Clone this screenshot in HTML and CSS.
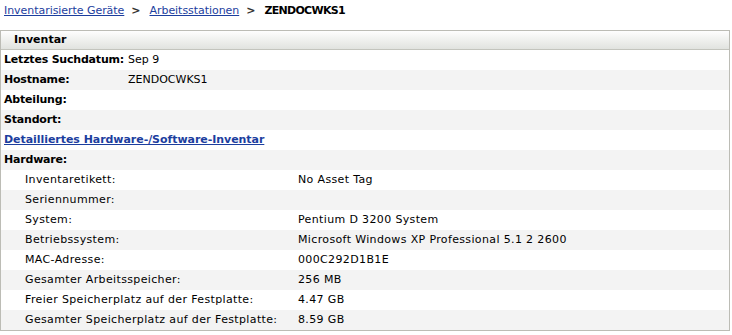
FILE: index.html
```html
<!DOCTYPE html>
<html>
<head>
<meta charset="utf-8">
<link rel="stylesheet" href="styles.css">
</head>
<body>
<div class="crumbs">
  <a href="#" class="crumb-link">Inventarisierte Geräte</a>
  <span class="sep">&gt;</span>
  <a href="#" class="crumb-link">Arbeitsstationen</a>
  <span class="sep">&gt;</span>
  <span class="current">ZENDOCWKS1</span>
</div>
<div class="panel">
  <div class="panel-head">Inventar</div>
  <div class="row odd"><span class="lbl">Letztes Suchdatum:</span><span class="val">Sep 9</span></div>
  <div class="row even"><span class="lbl">Hostname:</span><span class="val">ZENDOCWKS1</span></div>
  <div class="row odd"><span class="lbl">Abteilung:</span></div>
  <div class="row even"><span class="lbl">Standort:</span></div>
  <div class="row odd"><a href="#" class="detail-link">Detailliertes Hardware-/Software-Inventar</a></div>
  <div class="row even"><span class="lbl">Hardware:</span></div>
  <div class="row odd sub"><span class="slbl">Inventaretikett:</span><span class="sval">No Asset Tag</span></div>
  <div class="row even sub"><span class="slbl">Seriennummer:</span><span class="sval"></span></div>
  <div class="row odd sub"><span class="slbl">System:</span><span class="sval">Pentium D 3200 System</span></div>
  <div class="row even sub"><span class="slbl">Betriebssystem:</span><span class="sval">Microsoft Windows XP Professional 5.1 2 2600</span></div>
  <div class="row odd sub"><span class="slbl">MAC-Adresse:</span><span class="sval">000C292D1B1E</span></div>
  <div class="row even sub"><span class="slbl">Gesamter Arbeitsspeicher:</span><span class="sval">256 MB</span></div>
  <div class="row odd sub"><span class="slbl">Freier Speicherplatz auf der Festplatte:</span><span class="sval">4.47 GB</span></div>
  <div class="row even sub"><span class="slbl">Gesamter Speicherplatz auf der Festplatte:</span><span class="sval">8.59 GB</span></div>
</div>
</body>
</html>
```
FILE: styles.css
```css
html, body {
  margin: 0;
  padding: 0;
  background: #ffffff;
}
body {
  font-family: "DejaVu Sans", Verdana, sans-serif;
  font-size: 11px;
  color: #000;
}
.crumbs {
  height: 30px;
  display: flex;
  align-items: flex-start;
  padding: 4px 0 0 4px;
  box-sizing: border-box;
  line-height: 14px;
}
.crumb-link {
  color: #1c3e9e;
  text-decoration: underline;
  letter-spacing: -0.05px;
}
.sep {
  font-weight: bold;
  color: #333;
  margin: 0 9px 0 7px;
}
.current {
  font-weight: bold;
  letter-spacing: -0.7px;
}
.panel {
  width: 730px;
  box-sizing: border-box;
  border: 1px solid #bcbcb5;
}
.panel-head {
  height: 19px;
  box-sizing: border-box;
  border-bottom: 1px solid #c3c4bd;
  background: linear-gradient(#fefefe, #f2f3f1 40%, #e1e3df);
  font-weight: bold;
  padding-left: 13px;
  line-height: 18px;
}
.row {
  height: 20px;
  display: flex;
  align-items: center;
  line-height: 14px;
}
.odd { background: #ffffff; }
.even { background: #f3f3f3; }
.lbl {
  font-weight: bold;
  padding-left: 3px;
  width: 124px;
  white-space: nowrap;
  letter-spacing: -0.2px;
}
.detail-link {
  font-weight: bold;
  color: #1c3e9e;
  text-decoration: underline;
  padding-left: 3px;
  letter-spacing: -0.05px;
}
.slbl {
  padding-left: 24px;
  width: 273px;
  white-space: nowrap;
  letter-spacing: 0.36px;
}
.sval {
  white-space: nowrap;
  letter-spacing: 0.36px;
}
```
